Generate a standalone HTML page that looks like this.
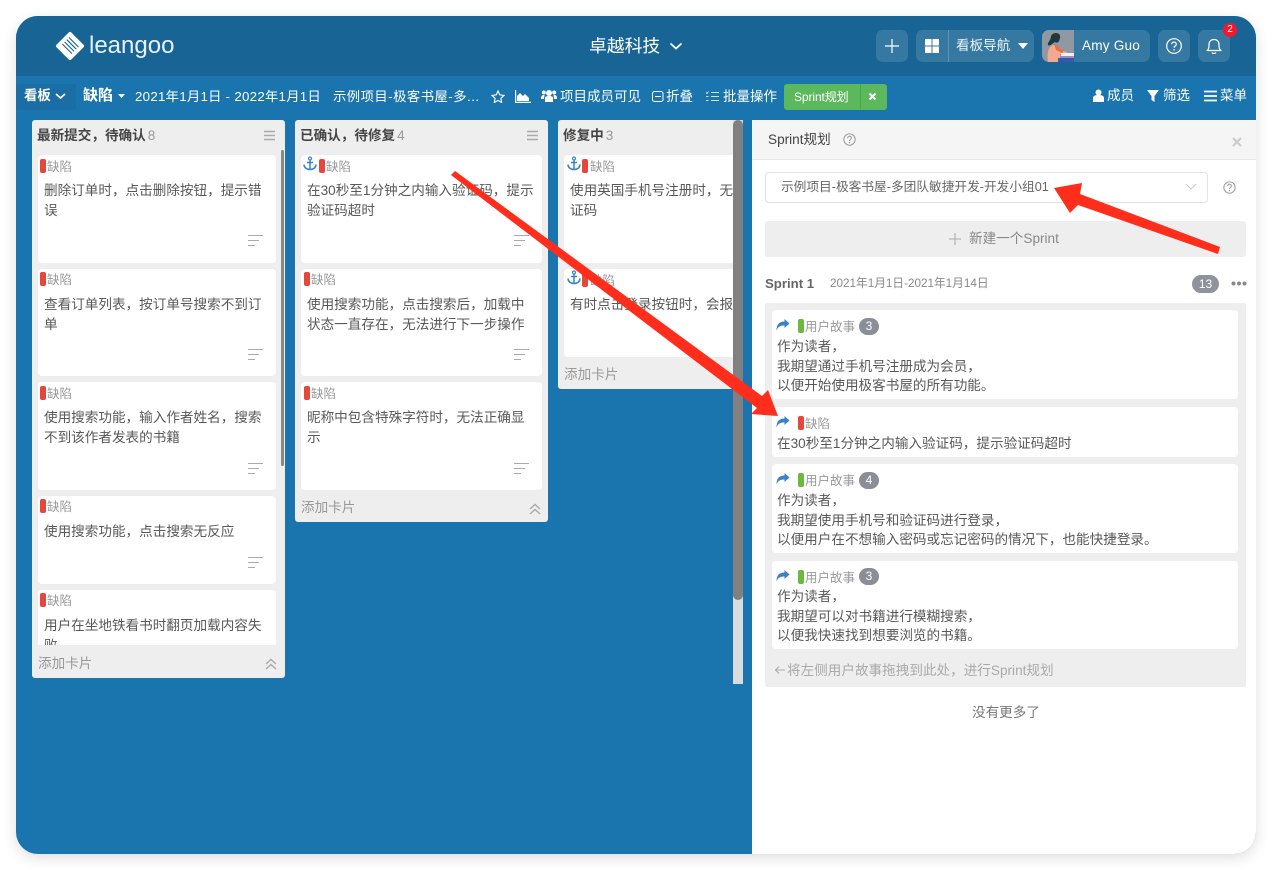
<!DOCTYPE html>
<html><head><meta charset="utf-8"><style>
*{box-sizing:border-box}
html,body{margin:0;padding:0;width:1272px;height:870px;overflow:hidden;background:#fff}
body{font-family:"Liberation Sans","Noto Sans CJK SC",sans-serif;font-size:13.6px;color:#585858;position:relative}
.a,.t{position:absolute}
.t{white-space:nowrap;line-height:20px}
#win{position:absolute;left:16px;top:16px;width:1240px;height:838px;border-radius:22px;background:#1a74ad;box-shadow:0 4px 14px rgba(0,0,0,.13);overflow:hidden}
#root{position:absolute;left:-16px;top:-16px;width:1272px;height:870px}
.btn{position:absolute;top:30px;height:32px;background:rgba(255,255,255,.13);border-radius:7px}
.w{color:#fff}
.col{position:absolute;background:#eee;border-radius:3px}
.card{position:absolute;background:#fff;border-radius:4px}
.bar{position:absolute;width:6px;height:14px;border-radius:2px;background:#e4473d}
.g{background:#6cb93f}
.tag{color:#999;font-size:12.5px}
.sl{position:absolute;height:1.3px;background:#aaa}
.hd{font-weight:bold;color:#444;font-size:13.6px}
.gr{color:#999;font-weight:normal;margin-left:2px}
.bdg{position:absolute;width:20px;height:17px;border-radius:9px;background:#8a8e96;color:#fff;text-align:center;font-size:12px;line-height:17px}
</style></head><body>
<div id="win"><div id="root">
<div class="a" style="left:0;top:0;width:1272px;height:76px;background:#186595"></div>

<svg class="a" style="left:55px;top:31px" width="30" height="30" viewBox="0 0 30 30"><path d="M15 3 27 15 15 27 3 15Z" fill="#fff" stroke="#fff" stroke-width="4" stroke-linejoin="round"/><path d="M14 6.500 23.500 16M11.800 8.700 21.300 18.200M9.600 10.900 19.100 20.400M7.400 13.100 16.900 22.600" stroke="#186595" stroke-width="1.100"/></svg>
<div class="t" style="left:89px;top:30px;font-size:24px;line-height:32px;color:#e8f0f5">leangoo</div>
<div class="t w" style="left:589px;top:36px;font-size:17.800px">卓越科技</div>
<svg class="a" style="left:669px;top:42px" width="14" height="9"><path d="M1.500 1.500 7 6.500 12.500 1.500" fill="none" stroke="#fff" stroke-width="1.800"/></svg>

<div class="btn" style="left:876px;width:32px"></div>
<svg class="a" style="left:884px;top:38px" width="16" height="16"><path d="M8 1v14M1 8h14" stroke="#fff" stroke-width="1.200"/></svg>
<div class="btn" style="left:916px;width:118px"></div>
<div class="a" style="left:948px;top:30px;width:1px;height:32px;background:rgba(255,255,255,.2)"></div>
<svg class="a" style="left:925px;top:39px" width="14" height="14"><path d="M0 0h6.500v6.500H0zM7.500 0H14v6.500H7.500zM0 7.500h6.500V14H0zM7.500 7.500H14V14H7.500z" fill="#fff"/></svg>
<div class="t" style="left:956px;top:36px;color:#eef3f7;font-size:13.600px">看板导航</div>
<svg class="a" style="left:1018px;top:43px" width="10" height="6"><path d="M0 0h10L5 6z" fill="#fff"/></svg>
<div class="btn" style="left:1042px;width:108px"></div>
<svg class="a" style="left:1042px;top:30px" width="32" height="32" viewBox="0 0 32 32"><defs><clipPath id="av"><path d="M7 0h25v32H7a7 7 0 0 1-7-7V7a7 7 0 0 1 7-7z"/></clipPath></defs><g clip-path="url(#av)"><rect width="32" height="32" fill="#9099a3"/><path d="M9 6c1-3 6-4 8-2s1 5 0 7-3 2-4 1c-2 1-6 5-7 3s3-5 3-9z" fill="#1f3a3d"/><path d="M6 32c-1-8 0-15 5-17 3 0 7 4 10 6l4 1v2l-7 0c0 3 0 6-1 8z" fill="#f3a98f"/><path d="M12 13l6 6 4 1-2 3-6-3z" fill="#ee6b3c"/><rect x="16" y="28" width="16" height="4" fill="#3a55b4"/><rect x="19" y="23" width="13" height="3" fill="#eef"/></g></svg>
<div class="t w" style="left:1082px;top:36px;font-size:13.600px;letter-spacing:.2px">Amy Guo</div>
<div class="btn" style="left:1158px;width:32px"></div>
<svg class="a" style="left:1166px;top:38px" width="16" height="16" viewBox="0 0 16 16"><circle cx="8" cy="8" r="7.300" fill="none" stroke="#fff" stroke-width="1.200"/><path d="M5.700 6.300c0-3 4.600-3 4.600 0 0 1.700-2.300 1.700-2.300 3.500" fill="none" stroke="#fff" stroke-width="1.200"/><circle cx="8" cy="11.800" r=".8" fill="#fff"/></svg>
<div class="btn" style="left:1198px;width:32px"></div>
<svg class="a" style="left:1205px;top:37px" width="18" height="18" viewBox="0 0 18 18"><path d="M2 13.500c1.500-1 2-2 2-6 0-3 2-5 5-5s5 2 5 5c0 4 .5 5 2 6z" fill="none" stroke="#fff" stroke-width="1.200" stroke-linejoin="round"/><path d="M7 15.500c.5 1.200 3.500 1.200 4 0" fill="none" stroke="#fff" stroke-width="1.200"/></svg>
<div class="a" style="left:1223px;top:23px;width:14px;height:14px;border-radius:50%;background:#f5162c;color:#fff;font-size:10px;line-height:14px;text-align:center">2</div>

<!-- toolbar -->
<div class="a" style="left:16px;top:84px;width:60px;height:26px;background:#1a6ea5;border-radius:3px"></div>
<div class="t w" style="left:24px;top:86px;font-weight:bold;font-size:13.400px">看板</div>
<svg class="a" style="left:55px;top:93px" width="11" height="7"><path d="M1 1l4.500 4L10 1" fill="none" stroke="#fff" stroke-width="1.700"/></svg>
<div class="t w" style="left:83px;top:86px;font-weight:bold;font-size:15px">缺陷</div>
<svg class="a" style="left:118px;top:94px" width="7" height="4"><path d="M0 0h7L3.500 4z" fill="#fff"/></svg>
<div class="t w" style="left:135px;top:87px;font-size:13.300px;letter-spacing:.27px">2021年1月1日 - 2022年1月1日</div>
<div class="t w" style="left:333px;top:87px;font-size:13.300px;letter-spacing:.5px">示例项目-极客书屋-多...</div>
<svg class="a" style="left:491px;top:90px" width="14" height="13" viewBox="0 0 14 13"><path d="M7 1l1.800 3.900 4.200.5-3.100 2.900.8 4.200L7 10.400 3.300 12.500l.8-4.200L1 5.400l4.200-.5z" fill="none" stroke="#fff" stroke-width="1.100"/></svg>
<svg class="a" style="left:515px;top:90px" width="16" height="13" viewBox="0 0 16 13"><path d="M.6 0v12.400H16" fill="none" stroke="#fff" stroke-width="1.200"/><path d="M2 11V6l3-3 3 3 2-2 4 4v3z" fill="#fff"/></svg>
<svg class="a" style="left:541px;top:89px" width="16" height="14" viewBox="0 0 16 14"><circle cx="8" cy="4" r="3" fill="#fff"/><circle cx="2.800" cy="3.500" r="2" fill="#fff"/><circle cx="13.200" cy="3.500" r="2" fill="#fff"/><path d="M4 13V9c0-1.500 1.500-2 4-2s4 .5 4 2v4z" fill="#fff"/><path d="M0 9c0-2 1-3 3.500-3L3 10H0zM16 9c0-2-1-3-3.500-3l.5 4h3z" fill="#fff"/></svg>
<div class="t w" style="left:560px;top:87px;font-size:13.500px">项目成员可见</div>
<svg class="a" style="left:652px;top:91px" width="12" height="11"><rect x=".5" y=".5" width="10.500" height="10" rx="2" fill="none" stroke="#fff"/><path d="M3 5.500h6" stroke="#fff"/></svg>
<div class="t w" style="left:666px;top:87px;font-size:13.500px">折叠</div>
<svg class="a" style="left:705px;top:91px" width="14" height="11"><path d="M6 1.500h8M6 5.500h8M6 9.500h8" stroke="#fff" stroke-opacity=".8"/><path d="M1 1.500l1 1 1.500-2M1 5.500h2.500M1 9.500h2.500" stroke="#fff" stroke-opacity=".8" fill="none"/></svg>
<div class="t w" style="left:723px;top:87px;font-size:13.500px">批量操作</div>
<div class="a" style="left:784px;top:84px;width:103px;height:26px;background:#5cb85c;border-radius:3px"></div>
<div class="a" style="left:860px;top:84px;width:1px;height:26px;background:#4fa84f"></div>
<div class="t w" style="left:794px;top:87px;font-size:12px;letter-spacing:-.1px">Sprint规划</div>
<svg class="a" style="left:868px;top:92px" width="9" height="9"><path d="M1.500 1.500l6 6M7.500 1.500l-6 6" stroke="#fff" stroke-width="2"/></svg>
<svg class="a" style="left:1093px;top:89px" width="11" height="13" viewBox="0 0 11 13"><circle cx="5.500" cy="3.500" r="3" fill="#fff"/><path d="M0 13V9c0-2 2-3 5.500-3S11 7 11 9v4z" fill="#fff"/></svg>
<div class="t w" style="left:1107px;top:86px;font-size:13.500px">成员</div>
<svg class="a" style="left:1147px;top:90px" width="12" height="12"><path d="M0 0h12L7.500 6v6l-3-2V6z" fill="#fff"/></svg>
<div class="t w" style="left:1163px;top:86px;font-size:13.500px">筛选</div>
<svg class="a" style="left:1204px;top:90px" width="13" height="12"><path d="M0 1.500h13M0 6h13M0 10.500h13" stroke="#fff" stroke-width="1.700"/></svg>
<div class="t w" style="left:1220px;top:86px;font-size:13.500px">菜单</div>

<!-- col 1 -->
<div class="col" style="left:32px;top:120px;width:253px;height:558px"></div>
<div class="t hd" style="left:37px;top:126px">最新提交，待确认<span class="gr">8</span></div>
<svg class="a" style="left:264px;top:130px" width="11" height="12"><path d="M0 1.500h11M0 5.500h11M0 9.500h11" stroke="#aaa" stroke-width="1.400"/></svg>
<div class="a" style="left:281px;top:150px;width:3px;height:316px;background:#888;border-radius:2px"></div>
<div class="card" style="left:38px;top:155px;width:238px;height:108px"></div>
<div class="bar" style="left:40px;top:159px"></div><div class="t tag" style="left:47px;top:157px">缺陷</div>
<div class="t" style="left:44px;top:181px;width:226px;white-space:normal">删除订单时，点击删除按钮，提示错误</div>
<div class="sl" style="left:248px;top:235px;width:15px"></div><div class="sl" style="left:248px;top:240px;width:11px"></div><div class="sl" style="left:248px;top:245px;width:7px"></div>
<div class="card" style="left:38px;top:269px;width:238px;height:107px"></div>
<div class="bar" style="left:40px;top:272px"></div><div class="t tag" style="left:47px;top:270px">缺陷</div>
<div class="t" style="left:44px;top:295px;width:226px;white-space:normal">查看订单列表，按订单号搜索不到订单</div>
<div class="sl" style="left:248px;top:349px;width:15px"></div><div class="sl" style="left:248px;top:354px;width:11px"></div><div class="sl" style="left:248px;top:359px;width:7px"></div>
<div class="card" style="left:38px;top:382px;width:238px;height:108px"></div>
<div class="bar" style="left:40px;top:386px"></div><div class="t tag" style="left:47px;top:384px">缺陷</div>
<div class="t" style="left:44px;top:408px;width:226px;white-space:normal">使用搜索功能，输入作者姓名，搜索不到该作者发表的书籍</div>
<div class="sl" style="left:248px;top:463px;width:15px"></div><div class="sl" style="left:248px;top:468px;width:11px"></div><div class="sl" style="left:248px;top:473px;width:7px"></div>
<div class="card" style="left:38px;top:496px;width:238px;height:88px"></div>
<div class="bar" style="left:40px;top:499px"></div><div class="t tag" style="left:47px;top:497px">缺陷</div>
<div class="t" style="left:44px;top:522px">使用搜索功能，点击搜索无反应</div>
<div class="sl" style="left:248px;top:557px;width:15px"></div><div class="sl" style="left:248px;top:562px;width:11px"></div><div class="sl" style="left:248px;top:567px;width:7px"></div>
<div class="a" style="left:38px;top:590px;width:238px;height:55px;overflow:hidden;background:#fff;border-radius:4px 4px 0 0">
<div class="bar" style="left:2px;top:3px"></div><div class="t tag" style="left:9px;top:1px">缺陷</div>
<div class="t" style="left:6px;top:26px;width:226px;white-space:normal">用户在坐地铁看书时翻页加载内容失败</div></div>
<div class="t" style="left:38px;top:654px;color:#999">添加卡片</div>
<svg class="a" style="left:265px;top:658px" width="12" height="12"><path d="M1 6l5-4.500L11 6M1 11l5-4.500L11 11" fill="none" stroke="#aaa" stroke-width="1.400"/></svg>

<!-- col 2 -->
<div class="col" style="left:295px;top:120px;width:253px;height:402px"></div>
<div class="t hd" style="left:300px;top:126px">已确认，待修复<span class="gr">4</span></div>
<svg class="a" style="left:527px;top:130px" width="11" height="12"><path d="M0 1.500h11M0 5.500h11M0 9.500h11" stroke="#aaa" stroke-width="1.400"/></svg>
<div class="card" style="left:301px;top:155px;width:241px;height:108px"></div>
<svg class="a anc" style="left:303px;top:156px" width="14" height="15" viewBox="0 0 14 15"><circle cx="7" cy="2.500" r="1.500" fill="none" stroke="#3a83c2" stroke-width="1.200"/><path d="M7 4v10M4 6.500h6M1 8.500c0 3 2.500 5 6 5s6-2 6-5" fill="none" stroke="#3a83c2" stroke-width="1.500"/></svg>
<div class="bar" style="left:319px;top:159px"></div><div class="t tag" style="left:326px;top:157px">缺陷</div>
<div class="t" style="left:307px;top:181px;width:230px;white-space:normal">在30秒至1分钟之内输入验证码，提示验证码超时</div>
<div class="sl" style="left:514px;top:235px;width:15px"></div><div class="sl" style="left:514px;top:240px;width:11px"></div><div class="sl" style="left:514px;top:245px;width:7px"></div>
<div class="card" style="left:301px;top:269px;width:241px;height:107px"></div>
<div class="bar" style="left:304px;top:272px"></div><div class="t tag" style="left:311px;top:270px">缺陷</div>
<div class="t" style="left:307px;top:295px;width:230px;white-space:normal">使用搜索功能，点击搜索后，加载中状态一直存在，无法进行下一步操作</div>
<div class="sl" style="left:514px;top:349px;width:15px"></div><div class="sl" style="left:514px;top:354px;width:11px"></div><div class="sl" style="left:514px;top:359px;width:7px"></div>
<div class="card" style="left:301px;top:382px;width:241px;height:108px"></div>
<div class="bar" style="left:304px;top:386px"></div><div class="t tag" style="left:311px;top:384px">缺陷</div>
<div class="t" style="left:307px;top:408px;width:230px;white-space:normal">昵称中包含特殊字符时，无法正确显示</div>
<div class="sl" style="left:514px;top:463px;width:15px"></div><div class="sl" style="left:514px;top:468px;width:11px"></div><div class="sl" style="left:514px;top:473px;width:7px"></div>
<div class="t" style="left:301px;top:498px;color:#999">添加卡片</div>
<svg class="a" style="left:529px;top:503px" width="12" height="12"><path d="M1 6l5-4.500L11 6M1 11l5-4.500L11 11" fill="none" stroke="#aaa" stroke-width="1.400"/></svg>

<!-- col 3 -->
<div class="a" style="left:558px;top:120px;width:175px;height:269px;overflow:hidden;background:#eee;border-radius:3px 0 0 3px">
<div class="t hd" style="left:5px;top:6px">修复中<span class="gr">3</span></div>
<div class="card" style="left:6px;top:35px;width:240px;height:108px"></div>
<svg class="a" style="left:9px;top:36px" width="14" height="15" viewBox="0 0 14 15"><circle cx="7" cy="2.500" r="1.500" fill="none" stroke="#3a83c2" stroke-width="1.200"/><path d="M7 4v10M4 6.500h6M1 8.500c0 3 2.500 5 6 5s6-2 6-5" fill="none" stroke="#3a83c2" stroke-width="1.500"/></svg>
<div class="bar" style="left:24px;top:39px"></div><div class="t tag" style="left:32px;top:37px">缺陷</div>
<div class="t" style="left:12px;top:61px">使用英国手机号注册时，无法收到验<br>证码</div>
<div class="card" style="left:6px;top:149px;width:240px;height:88px"></div>
<svg class="a" style="left:9px;top:150px" width="14" height="15" viewBox="0 0 14 15"><circle cx="7" cy="2.500" r="1.500" fill="none" stroke="#3a83c2" stroke-width="1.200"/><path d="M7 4v10M4 6.500h6M1 8.500c0 3 2.500 5 6 5s6-2 6-5" fill="none" stroke="#3a83c2" stroke-width="1.500"/></svg>
<div class="bar" style="left:24px;top:153px"></div><div class="t tag" style="left:32px;top:151px">缺陷</div>
<div class="t" style="left:12px;top:175px">有时点击登录按钮时，会报错</div>
<div class="t" style="left:6px;top:245px;color:#999">添加卡片</div>
</div>
<div class="a" style="left:733px;top:120px;width:10px;height:564px;background:#d8dcdf"></div>
<div class="a" style="left:733px;top:120px;width:10px;height:480px;background:#808080;border-radius:5px"></div>

<!-- panel -->
<div class="a" style="left:752px;top:120px;width:504px;height:734px;background:#fff"></div>
<div class="a" style="left:752px;top:120px;width:504px;height:40px;background:#f5f5f5;border-bottom:1px solid #e8e8e8"></div>
<div class="t" style="left:768px;top:130px;color:#444">Sprint规划</div>
<svg class="a" style="left:843px;top:133px" width="13" height="13" viewBox="0 0 16 16"><circle cx="8" cy="8" r="7" fill="none" stroke="#999" stroke-width="1.200"/><path d="M5.700 6.300c0-3 4.600-3 4.600 0 0 1.700-2.300 1.700-2.300 3.500" fill="none" stroke="#999" stroke-width="1.200"/><circle cx="8" cy="11.800" r=".8" fill="#999"/></svg>
<svg class="a" style="left:1232px;top:137px" width="10" height="10"><path d="M1 1l8 8M9 1l-8 8" stroke="#ccc" stroke-width="2.200"/></svg>
<div class="a" style="left:765px;top:172px;width:443px;height:31px;border:1px solid #e2e2e2;border-radius:4px;background:#fff"></div>
<div class="t" style="left:781px;top:177px;font-size:12.700px;color:#666">示例项目-极客书屋-多团队敏捷开发-开发小组01</div>
<svg class="a" style="left:1185px;top:183px" width="12" height="8"><path d="M1 1l5 5 5-5" fill="none" stroke="#ccc"/></svg>
<svg class="a" style="left:1223px;top:181px" width="13" height="13" viewBox="0 0 16 16"><circle cx="8" cy="8" r="7" fill="none" stroke="#999" stroke-width="1.200"/><path d="M5.700 6.300c0-3 4.600-3 4.600 0 0 1.700-2.300 1.700-2.300 3.500" fill="none" stroke="#999" stroke-width="1.200"/><circle cx="8" cy="11.800" r=".8" fill="#999"/></svg>
<div class="a" style="left:765px;top:221px;width:481px;height:36px;background:#eee;border-radius:3px"></div>
<svg class="a" style="left:949px;top:233px" width="12" height="12"><path d="M6 0v12M0 6h12" stroke="#aaa"/></svg>
<div class="t" style="left:969px;top:229px;color:#888;font-size:13.600px">新建一个Sprint</div>
<div class="t" style="left:765px;top:274px;font-weight:bold;font-size:13.200px;color:#666">Sprint 1</div>
<div class="t" style="left:830px;top:274px;font-size:11.700px;color:#888">2021年1月1日-2021年1月14日</div>
<div class="bdg" style="left:1192px;top:275px;width:27px;height:18px;line-height:18px;background:#8f939b">13</div>
<svg class="a" style="left:1231px;top:281px" width="16" height="5"><circle cx="2.500" cy="2.500" r="2" fill="#888"/><circle cx="8" cy="2.500" r="2" fill="#888"/><circle cx="13.500" cy="2.500" r="2" fill="#888"/></svg>

<div class="a" style="left:765px;top:303px;width:481px;height:384px;background:#eee;border-radius:2px"></div>

<div class="card" style="left:772px;top:310px;width:466px;height:89px"></div>
<svg class="a" style="left:776px;top:319px" width="14" height="12" viewBox="0 0 14 12"><path d="M13.500 4.500 8.500 0v2.500C3 2.500 .5 5.500.5 11.500 2 7.500 4.500 6.500 8.500 6.500V9z" fill="#3a83c2"/></svg>
<div class="bar g" style="left:798px;top:319px"></div><div class="t tag" style="left:805px;top:317px">用户故事</div>
<div class="bdg" style="left:859px;top:318px">3</div>
<div class="t" style="left:777px;top:337px;line-height:19.500px">作为读者，<br>我期望通过手机号注册成为会员，<br>以便开始使用极客书屋的所有功能。</div>

<div class="card" style="left:772px;top:407px;width:466px;height:50px"></div>
<svg class="a" style="left:776px;top:416px" width="14" height="12" viewBox="0 0 14 12"><path d="M13.500 4.500 8.500 0v2.500C3 2.500 .5 5.500.5 11.500 2 7.500 4.500 6.500 8.500 6.500V9z" fill="#3a83c2"/></svg>
<div class="bar" style="left:798px;top:416px"></div><div class="t tag" style="left:805px;top:414px">缺陷</div>
<div class="t" style="left:777px;top:434px">在30秒至1分钟之内输入验证码，提示验证码超时</div>

<div class="card" style="left:772px;top:464px;width:466px;height:89px"></div>
<svg class="a" style="left:776px;top:473px" width="14" height="12" viewBox="0 0 14 12"><path d="M13.500 4.500 8.500 0v2.500C3 2.500 .5 5.500.5 11.500 2 7.500 4.500 6.500 8.500 6.500V9z" fill="#3a83c2"/></svg>
<div class="bar g" style="left:798px;top:473px"></div><div class="t tag" style="left:805px;top:471px">用户故事</div>
<div class="bdg" style="left:859px;top:472px">4</div>
<div class="t" style="left:777px;top:491px;line-height:19.500px">作为读者，<br>我期望使用手机号和验证码进行登录，<br>以便用户在不想输入密码或忘记密码的情况下，也能快捷登录。</div>

<div class="card" style="left:772px;top:561px;width:466px;height:88px"></div>
<svg class="a" style="left:776px;top:570px" width="14" height="12" viewBox="0 0 14 12"><path d="M13.500 4.500 8.500 0v2.500C3 2.500 .5 5.500.5 11.500 2 7.500 4.500 6.500 8.500 6.500V9z" fill="#3a83c2"/></svg>
<div class="bar g" style="left:798px;top:570px"></div><div class="t tag" style="left:805px;top:568px">用户故事</div>
<div class="bdg" style="left:859px;top:568px">3</div>
<div class="t" style="left:777px;top:587px;line-height:19.500px">作为读者，<br>我期望可以对书籍进行模糊搜索，<br>以便我快速找到想要浏览的书籍。</div>

<svg class="a" style="left:774px;top:665px" width="12" height="10"><path d="M11 5H1.500M5 1.500 1.500 5 5 8.500" fill="none" stroke="#aaa" stroke-width="1.100"/></svg>
<div class="t" style="left:787px;top:661px;color:#aaa;font-size:13.600px">将左侧用户故事拖拽到此处，进行Sprint规划</div>
<div class="t" style="left:972px;top:703px;color:#777;font-size:13.600px">没有更多了</div>
</div></div>

<svg class="a" style="left:0;top:0" width="1272" height="870" viewBox="0 0 1272 870">
<path d="M455 171 762 396 768 390 778 416 751 414 757 408 451 175Z" fill="#fe2d1c"/>
<path d="M1220 247 1218 254 1078 205 1070 213 1054 188 1082 183 1080 194Z" fill="#fe2d1c"/>
</svg>
</body></html>
